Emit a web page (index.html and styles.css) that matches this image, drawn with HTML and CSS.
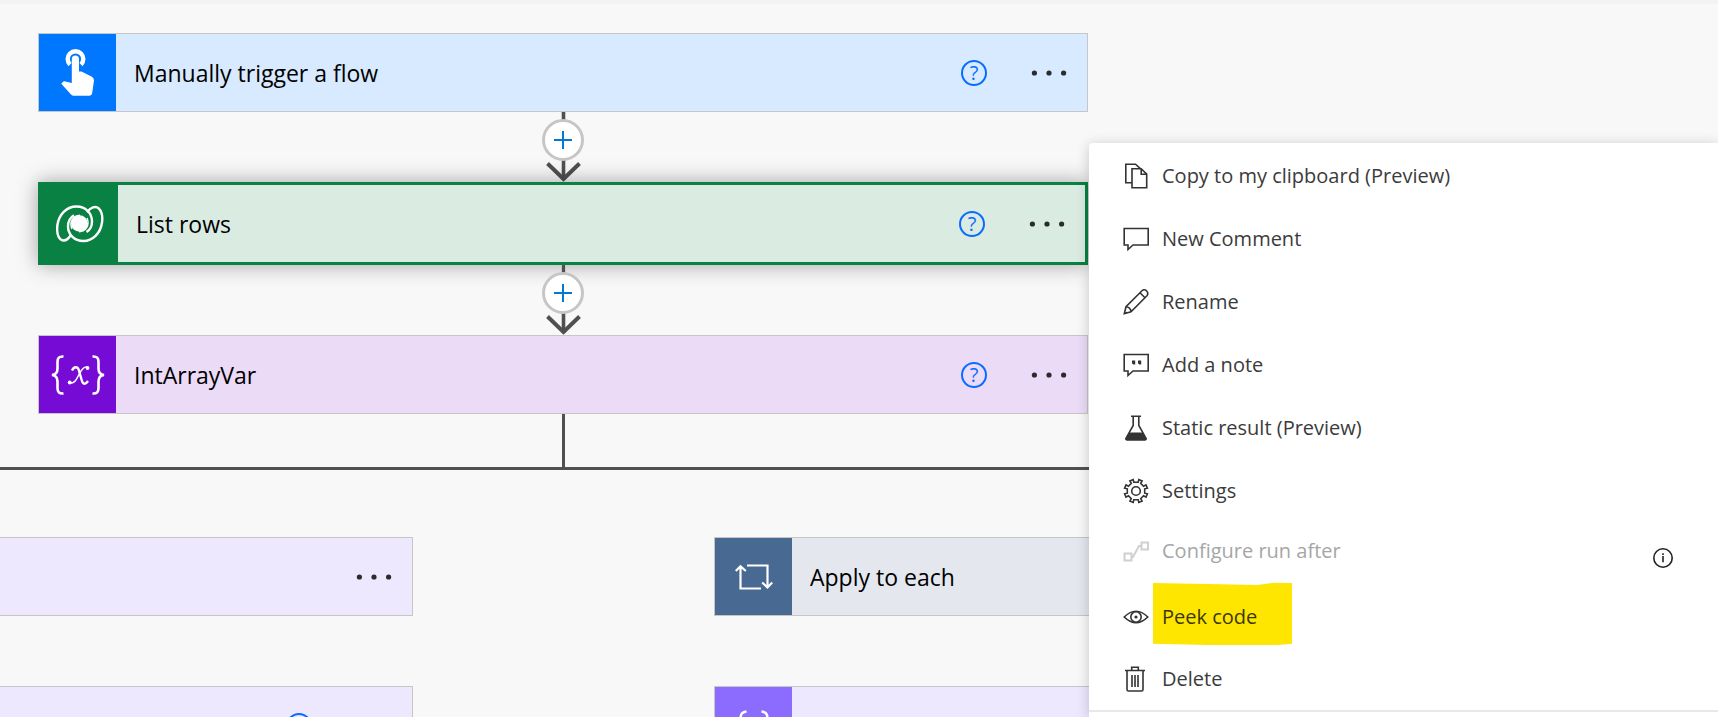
FILE: index.html
```html
<!DOCTYPE html>
<html lang="en">
<head>
<meta charset="utf-8">
<title>Flow designer</title>
<link rel="stylesheet" href="styles.css">
</head>
<body>
<svg class="defs" aria-hidden="true">
  <symbol id="dots" viewBox="0 0 36 6"><circle cx="3.4" cy="3" r="2.6"/><circle cx="18" cy="3" r="2.6"/><circle cx="32.6" cy="3" r="2.6"/></symbol>
  <symbol id="arrow" viewBox="0 0 42 70">
    <path d="M19.5 0v68M23.5 0v68" stroke="#c8c6c4" stroke-width="1" fill="none"/>
    <path d="M21.5 0v66" stroke="#505050" stroke-width="3" fill="none"/>
    <path d="M5.500 51.500 21.500 67 37.500 51.500" stroke="#505050" stroke-width="4" fill="none"/>
  </symbol>
</svg>
<main class="canvas">
  <section class="trunk">
    <article class="card trigger">
      <span class="card-icon">
        <svg width="34" height="48" viewBox="0 0 34 48"><path d="M9 15.600a7.800 7.800 0 1 1 11 0" fill="none" stroke="#fff" stroke-width="4.400"/><path d="M10.800 34V10.200a3.600 3.600 0 0 1 7.200 0V22.500h2.500l10 5q2.700 1.300 2.500 4l-1.800 12.500q-.5 2.800-3.200 2.800H13q-1.800 0-3-1.200L.3 34.800l1.200-1.500q1-1.300 2.800-.9z" fill="#fff"/></svg>
      </span>
      <h2 class="card-title">Manually trigger a flow</h2>
      <button class="help" type="button" aria-label="Help">?</button>
      <button class="more" type="button" aria-label="More"><svg><use href="#dots"/></svg></button>
    </article>
    <div class="connector">
      <svg class="arrow"><use href="#arrow"/></svg>
      <button class="add" type="button" aria-label="Insert a new step"></button>
    </div>
    <article class="card rows selected">
      <span class="card-icon">
        <svg width="48" height="38" viewBox="0 0 48 38" fill="none" stroke="#fff" stroke-width="2.400"><circle cx="23.500" cy="18.500" r="8.300" fill="#fff" stroke="none"/><path d="M14.500 30.500C11.500 35 8 36.500 4.800 34.500 1.500 32 .8 25.500 1.400 20 3 9 11 1.500 20.500 1.500c9.500 0 15.500 7 15.500 15 0 5-2 8.500-5.500 10.500"/><path d="M31 7.200C34.500 2.500 39.500 .5 42.700 3.300c3.300 3.200 4 9.200 3.300 14.200C44.500 28.500 36.500 36 27.500 36 18 36 12 29 12 21.500c0-5 2-9 6-11.300"/><path d="M16 24c-3-7 1-13.500 8-13.800M31 13c3 7-1 13.500-8 13.800" stroke-width="1.500"/></svg>
      </span>
      <h2 class="card-title">List rows</h2>
      <button class="help" type="button" aria-label="Help">?</button>
      <button class="more" type="button" aria-label="More"><svg><use href="#dots"/></svg></button>
    </article>
    <div class="connector">
      <svg class="arrow"><use href="#arrow"/></svg>
      <button class="add" type="button" aria-label="Insert a new step"></button>
    </div>
    <article class="card variable">
      <span class="card-icon">
        <svg width="54" height="40" viewBox="0 0 54 40" fill="none" stroke="#fff" stroke-width="2.600"><path d="M12.500 1.500C8 1.200 6.500 3 6.500 7v6.500c0 4-1.500 6-5.500 6.500 4 .5 5.500 2.500 5.500 6.500V33c0 4 1.500 5.800 6 5.500M41.500 1.500c4.500-.3 6 1.500 6 5.500v6.500c0 4 1.500 6 5.500 6.500-4 .5-5.500 2.500-5.500 6.500V33c0 4-1.500 5.800-6 5.500"/><path d="M21 15.500c2-4 5.500-4.500 6.800-.5l3 10.500c1.200 4 3.500 4.500 6.200.5" stroke-width="2.400"/><path d="M37 12.500c-4-2-7 3-9 7-2.500 5-5 10-9.500 8" stroke-width="1.500"/><circle cx="36.500" cy="13" r="1.900" fill="#fff" stroke="none"/><circle cx="18.700" cy="27.500" r="1.900" fill="#fff" stroke="none"/></svg>
      </span>
      <h2 class="card-title">IntArrayVar</h2>
      <button class="help" type="button" aria-label="Help">?</button>
      <button class="more" type="button" aria-label="More"><svg><use href="#dots"/></svg></button>
    </article>
    <div class="stem"></div>
  </section>
  <section class="branches">
    <div class="branch branch-left">
      <article class="card data">
        <button class="more" type="button" aria-label="More"><svg><use href="#dots"/></svg></button>
      </article>
      <article class="card data">
        <button class="help" type="button" aria-label="Help">?</button>
        <button class="more" type="button" aria-label="More"><svg><use href="#dots"/></svg></button>
      </article>
    </div>
    <div class="branch branch-right">
      <article class="card loop">
        <span class="card-icon">
          <svg width="38" height="26" viewBox="0 0 38 26" fill="none" stroke="#fff" stroke-width="2.200"><path d="M26 24.500H5.500V2M.8 7 5.500 2.200 10.800 7M12 1.500h20.500V24M27.200 18.500l5.300 5 4.700-5"/></svg>
        </span>
        <h2 class="card-title">Apply to each</h2>
      </article>
      <article class="card data">
        <span class="card-icon">
          <svg width="36" height="32" viewBox="0 0 36 32" fill="none" stroke="#fff" stroke-width="2.400"><path d="M10.500 1.500C6 2 4.500 4 4.500 8v3c0 3-1 4.500-3.500 5 2.500.5 3.500 2 3.500 5v3c0 4 1.500 6 6 6.500M25.500 1.500c4.500.5 6 2.500 6 6.500v3c0 3 1 4.500 3.500 5-2.500.5-3.500 2-3.500 5v3c0 4-1.500 6-6 6.500"/><path d="m14 21 9-12" stroke-width="2"/></svg>
        </span>
        <h2 class="card-title">Compose 2</h2>
      </article>
    </div>
  </section>

  <ul class="menu">
    <li><button type="button"><svg viewBox="0 0 26 26"><path d="M8.500 19.700H2.800V1.200h9.700l5.500 5M9 5.700h9.200l5.500 5.500v13.500H9zM18.200 5.700v5.500h5.500"/></svg><span>Copy to my clipboard (Preview)</span></button></li>
    <li><button type="button"><svg viewBox="0 0 26 26"><path d="M1.200 2.500h24V19H10l-5 4.500V19H1.200z"/></svg><span>New Comment</span></button></li>
    <li><button type="button"><svg viewBox="0 0 26 26"><path d="m1.300 24.700 1.700-7L18.700 2c3.500-3.300 8 1.500 5 5L8 22.700zM3 17.700c2.500 0 5 2 5 5M17 3.700 22 8.700M1.500 24.500l3-1"/></svg><span>Rename</span></button></li>
    <li><button type="button"><svg viewBox="0 0 26 26"><path d="M1.200 2.500h24V19H10l-5 4.500V19H1.200z"/><path class="solid" d="M9 8.500h3.200v4H10.500L9 11.500zM15 8.500h3.200v4h-1.700L15 11.500z"/></svg><span>Add a note</span></button></li>
    <li><button type="button"><svg viewBox="0 0 26 26"><path d="M8 1.200h10M10.200 1.200v9.300L3 23.200q-.5 1.600 1 1.600h18q1.500 0 1-1.600L15.800 10.500V1.200"/><path class="solid" d="M6.500 17.500h13l4 6.500-1 1.500h-19l-1-1.500z"/></svg><span>Static result (Preview)</span></button></li>
    <li><button type="button"><svg viewBox="0 0 26 26"><circle cx="13" cy="13" r="4.300"/><path d="M10.800 4.300 10.200 1.600 6.900 3 8.300 5.400 5.400 8.300 3 6.900 1.600 10.200 4.300 10.800v4.400L1.600 15.800 3 19.100l2.400-1.400 2.900 2.900L6.900 23l3.300 1.400.6-2.700h4.400l.6 2.700 3.300-1.400-1.400-2.400 2.900-2.900 2.400 1.400 1.400-3.300-2.700-.6v-4.400l2.700-.6L23 6.900l-2.400 1.400-2.900-2.900L19.100 3l-3.300-1.400-.6 2.700z"/></svg><span>Settings</span></button></li>
    <li class="run-after"><button type="button" disabled><svg viewBox="0 0 26 26"><path d="M1.500 15.500h7v7h-7zM18.500 4.500h6.500v7h-6.500zM8.500 19h1.500L16 8h2.500"/></svg><span>Configure run after</span></button><svg class="info" viewBox="0 0 20 20"><circle cx="10" cy="10" r="9.200"/><path d="M10 8v6.300M10 5.200v1.700"/></svg></li>
    <li class="peek"><button type="button"><svg viewBox="0 0 26 26"><path d="M1.200 13Q13 1.500 24.800 13 13 24.500 1.200 13z"/><circle cx="13" cy="13" r="5.200"/><circle class="solid" cx="13" cy="13" r="1.600"/></svg><span>Peek code</span></button></li>
    <li class="delete"><button type="button"><svg viewBox="0 0 26 26"><path d="M2 4.500h20M8.700 4.500V1.200h6.600v3.300M4 4.500v19q0 1.500 1.500 1.500h13q1.500 0 1.500-1.500v-19M9 9v12M12 9v12M15 9v12"/></svg><span>Delete</span></button></li>
  </ul>
</main>
</body>
</html>
```

FILE: styles.css
```css
* {
  box-sizing: border-box;
}

body {
  margin: 0;
  background: #f8f8f8;
  font-family: "Open Sans", "Noto Sans", sans-serif;
  color: #000;
}

button {
  padding: 0;
  border: 0;
  background: none;
  font: inherit;
  color: inherit;
}

.defs {
  display: none;
}

.canvas {
  position: relative;
  height: 100vh;
  overflow: hidden;
  padding-top: 29px;
  border-top: 4px solid #f3f3f3;
}

.trunk {
  width: 1050px;
  margin-left: 38px;
}

.card {
  display: flex;
  align-items: center;
  height: 79px;
  padding-right: 20px;
  border: 1px solid #c8c6c4;
}

.card-icon {
  display: flex;
  align-items: center;
  justify-content: center;
  flex: none;
  align-self: stretch;
  width: 77px;
}

.card-title {
  flex: 1;
  margin: 0;
  padding-left: 18px;
  font-size: 23px;
  font-weight: 400;
  line-height: 32px;
  white-space: nowrap;
}

.trigger { background: #d8eaff; }
.trigger .card-icon { background: #0077ff; }
.rows { background: #daebe2; }
.rows .card-icon { background: #088142; }
.variable { background: #ebdbf7; }
.variable .card-icon { background: #770bd6; }
.loop { background: #e4e8ee; }
.loop .card-icon { background: #486991; }
.data { background: #eee8ff; }
.data .card-icon { background: #8c6cff; }

.selected {
  position: relative;
  height: 83px;
  border: 3px solid #088142;
  box-shadow: 0 0 20px rgba(0, 0, 0, 0.35);
}

.help {
  width: 26px;
  height: 26px;
  margin-right: 44px;
  border: 2px solid #0a6cff;
  border-radius: 50%;
  color: #0a6cff;
  font-size: 20px;
  line-height: 22px;
}

.more {
  width: 36px;
  height: 36px;
}

.more svg {
  display: block;
  width: 36px;
  height: 6px;
  fill: #2b2b2b;
}

.connector {
  position: relative;
  display: flex;
  justify-content: center;
  height: 70px;
  padding-top: 7px;
}

.arrow {
  position: absolute;
  top: 0;
  width: 42px;
  height: 70px;
}

.add {
  position: relative;
  width: 42px;
  height: 42px;
  border: 3px solid #c8c6c4;
  border-radius: 50%;
  background:
    linear-gradient(#0078d4, #0078d4) center / 18px 2px no-repeat,
    linear-gradient(#0078d4, #0078d4) center / 2px 18px no-repeat,
    #fff;
}

.selected + .connector {
  z-index: 1;
}

.stem {
  width: 3px;
  height: 53px;
  margin: 0 auto;
  background: #505050;
}

.branches {
  display: flex;
  gap: 301px;
  padding-top: 67px;
  border-top: 3px solid #505050;
}

.branch {
  display: flex;
  flex-direction: column;
  gap: 70px;
}

.branch-left {
  width: 413px;
}

.branch-left .card {
  justify-content: flex-end;
  border-left: 0;
}

.branch-right {
  flex: 1;
}

.menu {
  position: absolute;
  z-index: 2;
  top: 139px;
  right: 0;
  bottom: 0;
  left: 1089px;
  margin: 0;
  padding: 1px 0 0;
  border-radius: 4px 0 0 0;
  background: #fff;
  box-shadow: 0 2px 14px rgba(0, 0, 0, 0.2);
  list-style: none;
  font-size: 20px;
  line-height: 28px;
  color: #3b3b3b;
}

.menu li {
  position: relative;
  display: flex;
  height: 63px;
}

.menu button {
  position: relative;
  display: flex;
  flex: 1;
  align-items: center;
  gap: 13px;
  padding-left: 34px;
  text-align: left;
}

.menu svg {
  width: 26px;
  height: 26px;
  fill: none;
  stroke: #333;
  stroke-width: 1.6;
}

.menu .solid {
  fill: #333;
  stroke: none;
}

.run-after button {
  padding-bottom: 6px;
  color: #a6a6a6;
}

.run-after button svg {
  stroke: #d0d0d0;
  stroke-width: 2;
}

.menu .info {
  width: 20px;
  height: 20px;
  margin: 26px 45px 0 0;
  stroke: #222;
}

.peek::before {
  content: "";
  position: absolute;
  top: -2px;
  left: 64px;
  width: 139px;
  height: 62px;
  background: #ffe600;
  clip-path: polygon(0 0, 40% 1px, 75% 2px, 86% 0, 100% 0, 100% 98%, 90% 100%, 40% 100%, 0 98%);
}

.peek span {
  color: #3b3808;
}

.menu .delete {
  height: 64px;
  border-bottom: 2px solid #e8e8e8;
}
```
